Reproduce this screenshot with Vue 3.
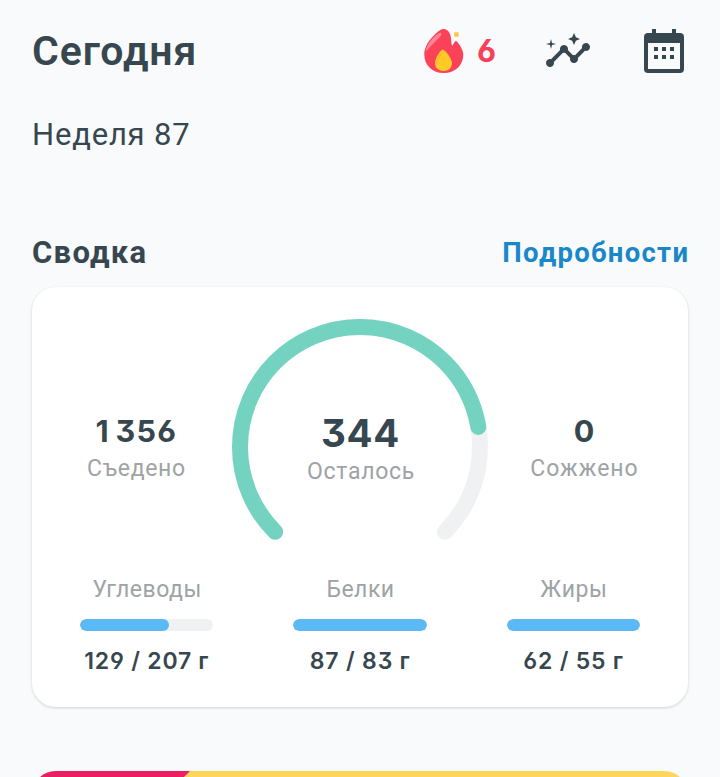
<template>
    <div class="page">
        <header class="header">
            <h1 class="title">Сегодня</h1>
            <div class="actions">
                <div class="streak">
                    <svg width="40" height="44" viewBox="0 0 40 44">
                        <path fill="#fc4259" d="M20.500 0C24.500 1 26.500 4.500 27 9c.3 2.800.2 5.500 1 7.700 1.700-1 2.300-4.700 4-4.700 1 0 7.300 7.800 7.300 13.500 0 11-8.300 18.500-19.600 18.500C8.300 44 .3 36.300.3 25.500.3 19.500 3 14 7.500 9 11.500 4.500 16.500-.5 20.500 0z" />
                        <path fill="#ff8593" d="M1.500 21.500C3 16 6.500 11 10.500 7.500c2.200-2 4.500-3.500 6-4 1.300 1 1 2.800-.2 4L2.300 21.800z" />
                        <path fill="#ffca28" d="M18.700 20.500c2 0 9.300 9 9.300 13.500 0 4.800-3.600 8-8.400 8-5 0-8.600-3.200-8.600-8 0-4.800 5.700-13.500 7.700-13.500z" />
                        <path fill="#ffb52e" d="M12 33.500c.3-3.500 2.800-7.700 5-9.300.8.8.6 2 0 3-.8 1.200-4.200 5-5 6.300z" />
                        <path fill="#ffc83a" d="M30.200 3.300h4.400v4.400h-4.400z" />
                    </svg>
                    <span class="streak-count">6</span>
                </div>
                <svg width="48" height="48" viewBox="0 0 24 24" fill="#37474f">
                    <path d="M21 8c-1.450 0-2.260 1.440-1.930 2.510l-3.550 3.560c-.3-.09-.74-.09-1.040 0l-2.550-2.550C12.270 10.450 11.460 9 10 9c-1.450 0-2.270 1.440-1.930 2.520l-4.560 4.550C2.440 15.740 1 16.550 1 18c0 1.100.9 2 2 2 1.450 0 2.260-1.440 1.930-2.510l4.550-4.560c.3.09.74.09 1.040 0l2.550 2.550C12.730 16.550 13.540 18 15 18c1.450 0 2.270-1.440 1.930-2.520l3.560-3.550c1.070.33 2.510-.48 2.510-1.930 0-1.100-.9-2-2-2z" />
                    <path d="M15 9l.94-2.070L18 6l-2.060-.93L15 3l-.92 2.070L12 6l2.080.93zM3.500 11L4 9l2-.5L4 8l-.5-2L3 8l-2 .5L3 9z" />
                </svg>
                <svg width="48" height="48" viewBox="0 0 48 48" fill="#37474f">
                    <path fill-rule="evenodd" d="M12 2h4v4h16V2h4v4h4a4 4 0 0 1 4 4v32a4 4 0 0 1-4 4H8a4 4 0 0 1-4-4V10a4 4 0 0 1 4-4h4zM8 16v26h32V16z" />
                    <path d="M14 20h4v4h-4zM22 20h4v4h-4zM30 20h4v4h-4zM14 28h4v4h-4zM22 28h4v4h-4zM30 28h4v4h-4z" />
                </svg>
            </div>
        </header>

        <p class="week">Неделя 87</p>

        <div class="section-head">
            <h2 class="section-title">Сводка</h2>
            <a class="details">Подробности</a>
        </div>

        <section class="card">
            <div class="summary">
                <div class="stat">
                    <span class="stat-value eaten">1 356</span>
                    <span class="stat-label">Съедено</span>
                </div>
                <div class="ring">
                    <svg class="ring-svg" width="256" height="256" viewBox="0 0 256 256">
                        <path class="arc" stroke="#f0f1f3" :d="arcPath" />
                        <path class="arc" stroke="#74d3c0" pathLength="100" :stroke-dasharray="`${progress} 200`" :d="arcPath" />
                    </svg>
                    <div class="ring-text">
                        <span class="ring-value">344</span>
                        <span class="stat-label ring-label">Осталось</span>
                    </div>
                </div>
                <div class="stat">
                    <span class="stat-value">0</span>
                    <span class="stat-label burned">Сожжено</span>
                </div>
            </div>

            <div class="macros">
                <div v-for="m in macros" :key="m.name" class="macro">
                    <span class="macro-name">{{ m.name }}</span>
                    <div class="bar">
                        <div class="bar-fill" :style="{ width: fill(m) + '%' }"></div>
                    </div>
                    <span class="macro-value">{{ m.value }} / {{ m.goal }} <span class="unit">г</span></span>
                </div>
            </div>
        </section>

        <div class="banner">
            <div class="banner-accent"></div>
        </div>
    </div>
</template>

<script setup>
import { computed, ref } from 'vue'

const eaten = ref(1356)
const goal = ref(1700)

// 270° arc, open at the bottom
const arcPath = 'M43.15 212.85A120 120 0 1 1 212.85 212.85'
const progress = computed(() => (eaten.value / goal.value) * 100)

const macros = [
    { name: 'Углеводы', value: 129, goal: 207 },
    { name: 'Белки', value: 87, goal: 83 },
    { name: 'Жиры', value: 62, goal: 55 }
]

// the rounded end of the bar sticks out past the value
const fill = (m) => Math.min(100, (m.value / m.goal) * 100 + 4.5)
</script>

<style>
body {
    margin: 0;
    background: #f9fafc;
}
</style>

<style scoped>
.page {
    height: 777px;
    overflow: hidden;
    box-sizing: border-box;
    padding: 0 32px;
    background: #f9fafc;
    color: #37474f;
    font-family: Roboto, "Liberation Sans", sans-serif;
}

.header {
    display: flex;
    align-items: center;
    justify-content: space-between;
    height: 102px;
}

.title {
    margin: 0;
    padding-bottom: 1px;
    font-size: 41px;
    line-height: 50px;
    font-weight: 600;
    letter-spacing: 0.9px;
}

.actions {
    display: flex;
    align-items: center;
    gap: 48px;
}

.actions svg {
    display: block;
}

.streak {
    display: flex;
    align-items: center;
    justify-content: space-between;
    width: 72px;
}

.streak-count {
    font: 700 31px/40px Inter, sans-serif;
    font-feature-settings: "cv03";
    color: #f9405a;
}

.week {
    margin: 13px 0 0;
    font-size: 31px;
    line-height: 40px;
    letter-spacing: 0.8px;
}

.section-head {
    display: flex;
    align-items: center;
    justify-content: space-between;
    height: 40px;
    margin-top: 78px;
}

.section-title {
    margin: 0;
    font-size: 31px;
    line-height: 40px;
    font-weight: 700;
    letter-spacing: 1.3px;
}

.details {
    margin-right: -1.3px;
    font-size: 27.5px;
    line-height: 40px;
    font-weight: 700;
    letter-spacing: 1.3px;
    color: #1a87c9;
}

.card {
    box-sizing: border-box;
    height: 420px;
    margin-top: 14px;
    padding: 32px 8px 0;
    border-radius: 24px;
    background: #fff;
    box-shadow: 0 1px 3px rgba(40, 50, 60, 0.2);
}

.summary {
    display: grid;
    grid-template-columns: 1fr 256px 1fr;
    height: 254px;
}

.stat,
.ring-text {
    display: flex;
    flex-direction: column;
    align-items: center;
}

.stat {
    padding-top: 93px;
}

.stat-value {
    font: 650 30.5px/38px Inter, sans-serif;
    font-feature-settings: "cv03", "cv04", "cv09";
}

.eaten {
    padding-left: 1px;
    letter-spacing: 1.3px;
    word-spacing: -3px;
}

.stat-label {
    margin-top: 1px;
    padding-left: 1px;
    font-size: 23px;
    line-height: 36px;
    letter-spacing: 0.7px;
    color: #9ea3a5;
}

.burned {
    letter-spacing: 1px;
}

.ring {
    display: grid;
}

.ring-svg,
.ring-text {
    grid-area: 1 / 1;
}

.arc {
    fill: none;
    stroke-width: 16;
    stroke-linecap: round;
}

.ring-text {
    padding-top: 90px;
}

.ring-value {
    padding-left: 1px;
    font: 650 38.5px/48px Inter, sans-serif;
    font-feature-settings: "cv09";
    letter-spacing: 0.6px;
}

.ring-label {
    padding-left: 2px;
    line-height: 28px;
}

.macros {
    display: grid;
    grid-template-columns: repeat(3, 1fr);
    gap: 80px;
    padding: 0 40px;
}

.macro {
    display: flex;
    flex-direction: column;
    align-items: center;
    white-space: nowrap;
}

.macro-name {
    margin-top: 1px;
    padding-left: 1px;
    font-size: 23px;
    line-height: 32px;
    letter-spacing: 0.5px;
    color: #9ea3a5;
}

.bar {
    width: 100%;
    height: 12px;
    margin: 13px 0;
    border-radius: 6px;
    overflow: hidden;
    background: #f0f1f3;
}

.bar-fill {
    height: 100%;
    border-radius: 6px;
    background: #5bb9f5;
}

.macro-value {
    font: 600 23px/34px Inter, sans-serif;
    font-feature-settings: "cv03", "cv04", "cv09";
    letter-spacing: 0.8px;
}

.unit {
    font-family: Roboto, sans-serif;
}

.banner {
    height: 120px;
    margin-top: 64px;
    border-radius: 24px;
    overflow: hidden;
    background: #ffd65c;
}

.banner-accent {
    width: 158px;
    height: 100%;
    background: #e91e63;
    clip-path: polygon(0 0, 100% 0, 24% 100%, 0 100%);
}
</style>
